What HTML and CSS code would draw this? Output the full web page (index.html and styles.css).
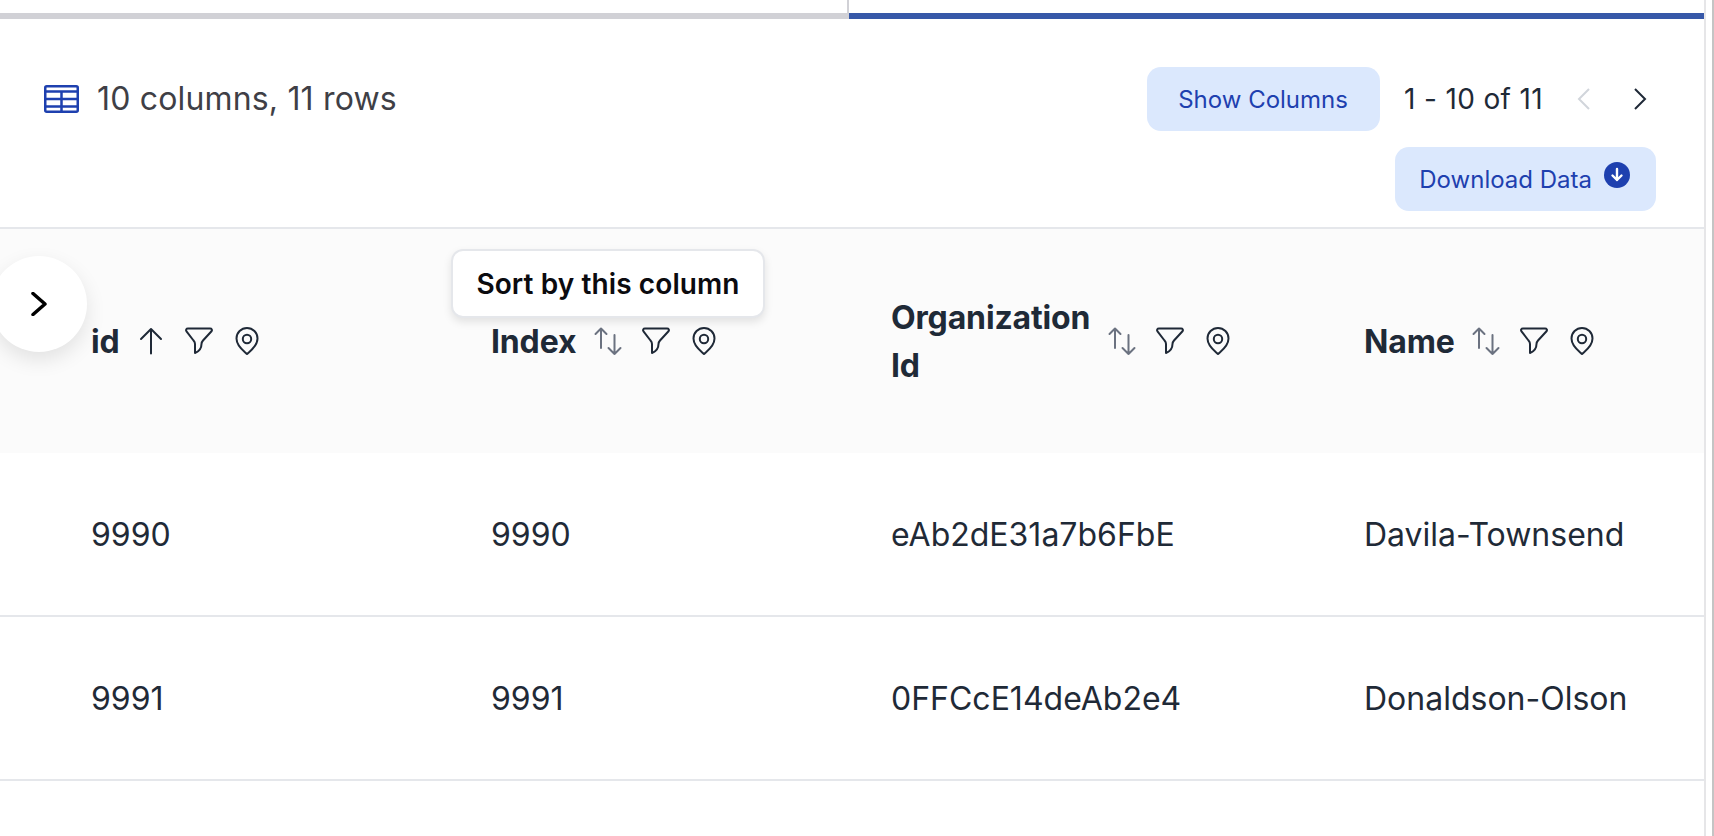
FILE: index.html
```html
<!DOCTYPE html>
<html lang="en">
<head>
    <meta charset="UTF-8">
    <meta name="viewport" content="width=device-width, initial-scale=1.0">
    <title>Data table</title>
    <link rel="stylesheet" href="styles.css">
</head>
<body>

    <div class="panel">
        <!-- Tabs -->
        <div class="tabs">
            <div class="tab"></div>
            <div class="tab active"></div>
        </div>

        <!-- Toolbar -->
        <div class="toolbar">
            <div class="summary">
                <svg class="table-icon" viewBox="0 0 35 28" fill="none" stroke="#1e40af" stroke-width="2.500">
                    <rect x="1.250" y="1.250" width="32.500" height="25.500" rx="1.500"/>
                    <path d="M1 6.500h33M1 14h33M1 21.500h33M17.500 6.500V27"/>
                </svg>
                <span>10 columns, 11 rows</span>
            </div>
            <div class="actions">
                <div class="actions-row">
                    <button class="btn btn-columns">Show Columns</button>
                    <span class="page-count">1 - 10 of 11</span>
                    <svg class="chevron disabled" viewBox="0 0 16 24"><path d="M13 2 3 12l10 10"/></svg>
                    <svg class="chevron" viewBox="0 0 16 24"><path d="M3 2l10 10L3 22"/></svg>
                </div>
                <button class="btn btn-download">
                    Download Data
                    <svg class="download-icon" viewBox="0 0 26 26">
                        <circle cx="13" cy="13" r="13" fill="#1e40af"/>
                        <path d="M13 7v11M8.500 13.500 13 18l4.500-4.500" fill="none" stroke="#fff" stroke-width="2.400" stroke-linecap="round" stroke-linejoin="round"/>
                    </svg>
                </button>
            </div>
        </div>

        <!-- Table -->
        <div class="data-table">
            <div class="row head">
                <div class="cell">
                    <span class="col-name">id</span>
                    <div class="col-icons">
                        <svg class="icon" viewBox="0 0 32 32"><path d="M16 28.500V4M6 14 16 4l10 10"/></svg>
                        <svg class="icon" viewBox="0 0 32 32"><use href="#funnel"/></svg>
                        <svg class="icon" viewBox="0 0 32 32"><use href="#pin"/></svg>
                    </div>
                </div>
                <div class="cell">
                    <span class="col-name">Index</span>
                    <div class="col-icons">
                        <svg class="icon muted" viewBox="0 0 32 32"><use href="#sort"/></svg>
                        <svg class="icon" viewBox="0 0 32 32"><use href="#funnel"/></svg>
                        <svg class="icon" viewBox="0 0 32 32"><use href="#pin"/></svg>
                    </div>
                </div>
                <div class="cell">
                    <span class="col-name wrap">Organization Id</span>
                    <div class="col-icons">
                        <svg class="icon muted" viewBox="0 0 32 32"><use href="#sort"/></svg>
                        <svg class="icon" viewBox="0 0 32 32"><use href="#funnel"/></svg>
                        <svg class="icon" viewBox="0 0 32 32"><use href="#pin"/></svg>
                    </div>
                </div>
                <div class="cell">
                    <span class="col-name">Name</span>
                    <div class="col-icons">
                        <svg class="icon muted" viewBox="0 0 32 32"><use href="#sort"/></svg>
                        <svg class="icon" viewBox="0 0 32 32"><use href="#funnel"/></svg>
                        <svg class="icon" viewBox="0 0 32 32"><use href="#pin"/></svg>
                    </div>
                </div>
            </div>
            <div class="row">
                <div class="cell">9990</div>
                <div class="cell">9990</div>
                <div class="cell">eAb2dE31a7b6FbE</div>
                <div class="cell">Davila-Townsend</div>
            </div>
            <div class="row">
                <div class="cell">9991</div>
                <div class="cell">9991</div>
                <div class="cell">0FFCcE14deAb2e4</div>
                <div class="cell">Donaldson-Olson</div>
            </div>
        </div>

        <!-- Over the table -->
        <button class="scroll-btn">
            <svg viewBox="0 0 16 24"><path d="M2 1.500l12 10.500-12 10.500"/></svg>
        </button>
        <div class="tooltip">Sort by this column</div>
    </div>

    <svg class="defs" width="0" height="0">
        <defs>
            <g id="funnel">
                <path d="M5 3.500h22c1.800 0 2.500 1.500 1.500 2.800l-8.500 9.200c-1 1.100-1.500 2-1.500 3.500 0 4-1.500 7-6.500 9V19c0-1.500-.500-2.500-1.500-3.500L3.500 6.300C2.500 5 3.200 3.500 5 3.500z"/>
            </g>
            <g id="pin">
                <path d="M16 29c-2.500-2.500-10.500-7.500-10.500-15.500a10.500 10.500 0 0 1 21 0C26.500 21.500 18.500 26.500 16 29z"/>
                <circle cx="16" cy="14" r="4.200"/>
            </g>
            <g id="sort">
                <path d="M9 23V3.500M3.500 9 9 3.500 14.500 9M22.500 10v19M16.500 23l6 6 6-6"/>
            </g>
        </defs>
    </svg>

</body>
</html>
```

FILE: styles.css
```css
/* General Reset */
* {
    margin: 0;
    padding: 0;
    box-sizing: border-box;
}

body {
    width: 1714px;
    height: 836px;
    font-family: 'Inter', sans-serif;
    background-color: #fff;
    color: #1f2a37;
    border-right: 2px solid #c4c4c4;
    overflow: hidden;
}

.panel {
    position: relative;
    width: 1706px;
    height: 836px;
    padding-top: 13px;
    border-right: 2px solid #e6e6e8;
    overflow: hidden;
}

/* Tabs */
.tabs {
    display: flex;
}

.tab {
    position: relative;
    width: 849px;
    height: 6px;
    background-color: #d1d1d6;
}

.tab::after {
    content: "";
    position: absolute;
    right: 0;
    bottom: 6px;
    width: 2px;
    height: 13px;
    background-color: #d1d1d6;
}

.tab.active {
    flex: 1;
    background-color: #3758a8;
}

.tab.active::after {
    display: none;
}

/* Toolbar */
.toolbar {
    display: flex;
    justify-content: space-between;
    align-items: flex-start;
    padding: 48px 48px 16px 44px;
}

.summary {
    display: flex;
    align-items: center;
    gap: 18px;
    height: 64px;
    font-size: 32px;
    letter-spacing: 0.17px;
    color: #3f3f46;
}

.summary span {
    margin-bottom: 2px;
}

.table-icon {
    width: 35px;
    height: 28px;
}

.actions {
    display: flex;
    flex-direction: column;
    align-items: flex-end;
    gap: 16px;
}

.actions-row {
    display: flex;
    align-items: center;
}

.btn {
    display: flex;
    align-items: center;
    height: 64px;
    border: none;
    border-radius: 14px;
    background-color: #dbe8fd;
    color: #1e40af;
    font-family: inherit;
    font-size: 24px;
}

.btn-columns {
    padding: 0 32px 0 31px;
}

.btn-download {
    gap: 12px;
    padding: 0 26px 0 24px;
}

.page-count {
    margin-left: 24px;
    font-size: 28px;
    letter-spacing: 0.36px;
}

.chevron {
    width: 16px;
    height: 24px;
    margin-left: 33px;
    fill: none;
    stroke: #1f2937;
    stroke-width: 2;
}

.chevron.disabled {
    stroke: #d1d5db;
}

.chevron:last-child {
    margin-left: 40px;
    margin-right: 8px;
}

.download-icon {
    width: 26px;
    height: 26px;
    margin-top: -8px;
}

/* Table */
.data-table {
    border-top: 2px solid #e5e7eb;
}

.row {
    display: grid;
    grid-template-columns: 491px 400px 473px 1fr;
    height: 164px;
    border-bottom: 2px solid #e5e7eb;
    font-size: 32px;
}

.row.head {
    height: 224px;
    background-color: #fbfbfb;
    border-bottom: none;
}

.cell {
    display: flex;
    align-items: center;
    white-space: nowrap;
}

.cell:first-child {
    padding-left: 91px;
}

.col-name {
    font-weight: 700;
    line-height: 48px;
    letter-spacing: -0.15px;
    padding-top: 1px;
}

.col-name.wrap {
    white-space: normal;
    width: min-content;
}

.col-icons {
    display: flex;
    gap: 16px;
    margin-left: 15.5px;
}

.icon {
    width: 32px;
    height: 32px;
    fill: none;
    stroke: #1f2937;
    stroke-width: 2;
    stroke-linecap: round;
    stroke-linejoin: round;
}

.icon.muted {
    stroke: #6b7280;
}

.defs {
    position: absolute;
}

/* Things that sit over the table */
.scroll-btn {
    position: absolute;
    left: -9px;
    top: 256px;
    width: 96px;
    height: 96px;
    display: flex;
    align-items: center;
    justify-content: center;
    border: none;
    border-radius: 50%;
    background-color: #fff;
    box-shadow: 0 8px 20px rgba(0, 0, 0, 0.1);
}

.scroll-btn svg {
    width: 16px;
    height: 24px;
    fill: none;
    stroke: #000;
    stroke-width: 3.500;
    stroke-linecap: round;
    stroke-linejoin: round;
}

.tooltip {
    position: absolute;
    left: 451px;
    top: 249px;
    width: 314px;
    height: 69px;
    display: flex;
    align-items: center;
    justify-content: center;
    border: 2px solid #e5e7eb;
    border-radius: 12px;
    background-color: #fff;
    box-shadow: 0 4px 8px rgba(0, 0, 0, 0.1);
    color: #0b0b0f;
    font-size: 28px;
    font-weight: 600;
    letter-spacing: 0.1px;
}
```
